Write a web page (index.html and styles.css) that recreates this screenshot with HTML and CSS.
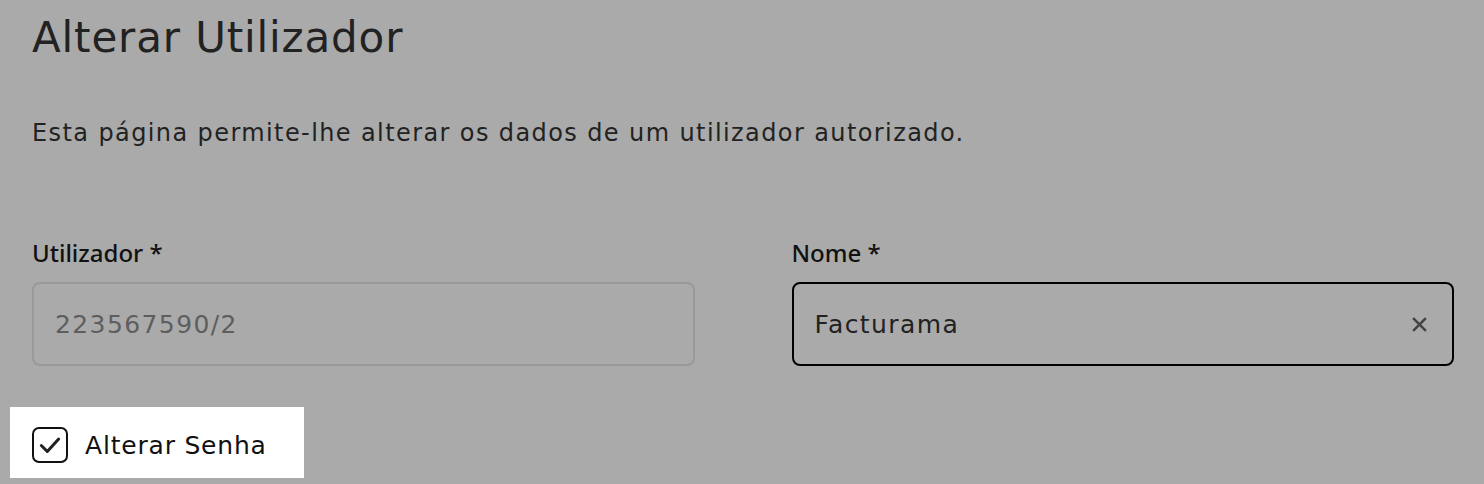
FILE: index.html
```html
<!DOCTYPE html>
<html lang="pt">
<head>
<meta charset="utf-8">
<title>Alterar Utilizador</title>
<link rel="stylesheet" href="styles.css">
</head>
<body>
<main class="page">
  <h1 class="title">Alterar Utilizador</h1>
  <p class="intro">Esta página permite-lhe alterar os dados de um utilizador autorizado.</p>
  <div class="fields">
    <div class="field">
      <label class="label">Utilizador <span class="req">*</span></label>
      <div class="input input-disabled"><span class="value">223567590/2</span></div>
    </div>
    <div class="field">
      <label class="label">Nome <span class="req">*</span></label>
      <div class="input input-active">
        <span class="value">Facturama</span>
        <svg class="clear" width="17" height="17" viewBox="0 0 16 16"><path d="M2 2 L14 14 M14 2 L2 14" stroke="#444" stroke-width="2.4" fill="none"/></svg>
      </div>
    </div>
  </div>
  <div class="highlight">
    <span class="checkbox">
      <svg width="26" height="26" viewBox="0 0 24 24"><path d="M4 12.5 L9.5 18 L20 6.5" stroke="#222" stroke-width="2.8" fill="none" stroke-linecap="round" stroke-linejoin="round"/></svg>
    </span>
    <span class="check-label">Alterar Senha</span>
  </div>
</main>
</body>
</html>
```
FILE: styles.css
```css
html, body {
  margin: 0;
  padding: 0;
  background: #aaaaaa;
  height: 100%;
  overflow: hidden;
}
.page {
  font-family: "DejaVu Sans", sans-serif;
  color: #222;
  padding: 10px 30px 0 32px;
}
.title {
  font-size: 42px;
  font-weight: 400;
  letter-spacing: 0.85px;
  line-height: 56px;
  margin: 0;
}
.intro {
  font-size: 24px;
  letter-spacing: 1.4px;
  line-height: 32px;
  margin: 51px 0 0 0;
}
.fields {
  display: grid;
  grid-template-columns: 1fr 1fr;
  column-gap: 97px;
  margin-top: 88px;
}
.field {
  display: flex;
  flex-direction: column;
}
.label {
  font-family: "Noto Sans", sans-serif;
  font-size: 24px;
  line-height: 32px;
  font-weight: 500;
  color: #111;
  margin-bottom: 13px;
}
.req {
  font-size: 24px;
}
.input {
  height: 84px;
  box-sizing: border-box;
  border-radius: 8px;
  display: flex;
  align-items: center;
  justify-content: space-between;
  padding: 0 24px 0 21px;
  font-size: 25px;
  letter-spacing: 1.4px;
}
.input-disabled {
  border: 2px solid #999;
  color: #5e5e5e;
}
.input-active {
  border: 2px solid #000;
  color: #222;
}
.highlight {
  background: #ffffff;
  display: inline-flex;
  align-items: center;
  gap: 17px;
  margin: 41px 0 0 -22px;
  padding: 20px 37px 15px 22px;
}
.checkbox {
  width: 36px;
  height: 36px;
  box-sizing: border-box;
  border: 2px solid #111;
  border-radius: 7px;
  display: flex;
  align-items: center;
  justify-content: center;
}
.check-label {
  font-size: 25px;
  letter-spacing: 0.8px;
  color: #111;
}
```
